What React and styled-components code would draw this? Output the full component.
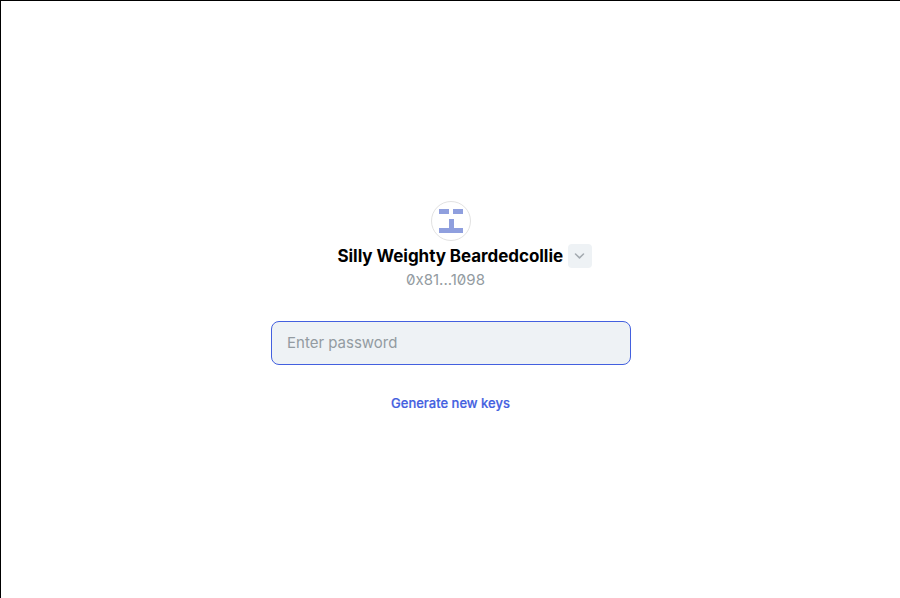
import React from "react";
import styled, { createGlobalStyle } from "styled-components";

const GlobalStyle = createGlobalStyle`
  * { box-sizing: border-box; }
  body { margin: 0; font-family: Inter, sans-serif; background: #fff; }
`;

const Screen = styled.main`
  height: 598px;
  border-top: 1px solid #000;
  border-left: 1px solid #000;
  background: #fff;
  display: flex;
  flex-direction: column;
  align-items: center;
  padding-top: 200px;
`;

const Avatar = styled.div`
  width: 40px;
  height: 40px;
  border: 1px solid #e2e2e2;
  border-radius: 50%;
  display: grid;
  place-items: center;
  svg { display: block; }
`;

const NameRow = styled.div`
  display: flex;
  align-items: center;
  gap: 4.5px;
  margin-top: 3px;
  margin-left: 28px;
  height: 24px;
`;

const Name = styled.h1`
  margin: 0;
  font-size: 17px;
  line-height: 22px;
  padding-bottom: 1px;
  font-weight: 700;
  letter-spacing: -0.05px;
  color: #000;
  white-space: nowrap;
`;

const SwitchButton = styled.button`
  width: 24px;
  height: 24px;
  padding: 0;
  border: 0;
  border-radius: 4px;
  background: #eef2f5;
  display: grid;
  place-items: center;
`;

const Address = styled.div`
  margin-top: 1px;
  font-size: 15px;
  line-height: 21px;
  font-feature-settings: "zero";
  color: #939ba1;
  margin-right: 10px;
`;

const PasswordInput = styled.input`
  width: 360px;
  height: 44px;
  margin-top: 31px;
  padding: 0 15px 2px 15.5px;
  border: 1px solid #4360df;
  border-radius: 8px;
  background: #eef2f5;
  font: 400 15px/22px Inter, sans-serif;
  outline: none;
  &::placeholder { color: #939ba1; opacity: 1; }
`;

const GenerateLink = styled.button`
  margin-top: 28px;
  padding: 0;
  border: 0;
  background: none;
  color: #4360df;
  font: 500 13px/20px Inter, sans-serif;
  -webkit-text-stroke: 0.2px #4360df;
`;

export default function App() {
  return (
    <>
      <GlobalStyle />
      <Screen>
        <Avatar>
          <svg width="38" height="38" viewBox="0 0 38 38" fill="#8f9fde" shapeRendering="crispEdges">
            <path d="M7 7h10v5H7zM21 7h10v5H21zM17 17h5v9h9v5H7v-5h10z" />
          </svg>
        </Avatar>
        <NameRow>
          <Name>Silly Weighty Beardedcollie</Name>
          <SwitchButton aria-label="Choose account">
            <svg width="12" height="12" viewBox="0 0 12 12" fill="none" stroke="#a3aab0" strokeWidth="1.5" strokeLinecap="round" strokeLinejoin="round">
              <path d="M1.500 4L5.500 7.900L9.500 4" />
            </svg>
          </SwitchButton>
        </NameRow>
        <Address>0x81...1098</Address>
        <PasswordInput type="password" placeholder="Enter password" />
        <GenerateLink>Generate new keys</GenerateLink>
      </Screen>
    </>
  );
}
